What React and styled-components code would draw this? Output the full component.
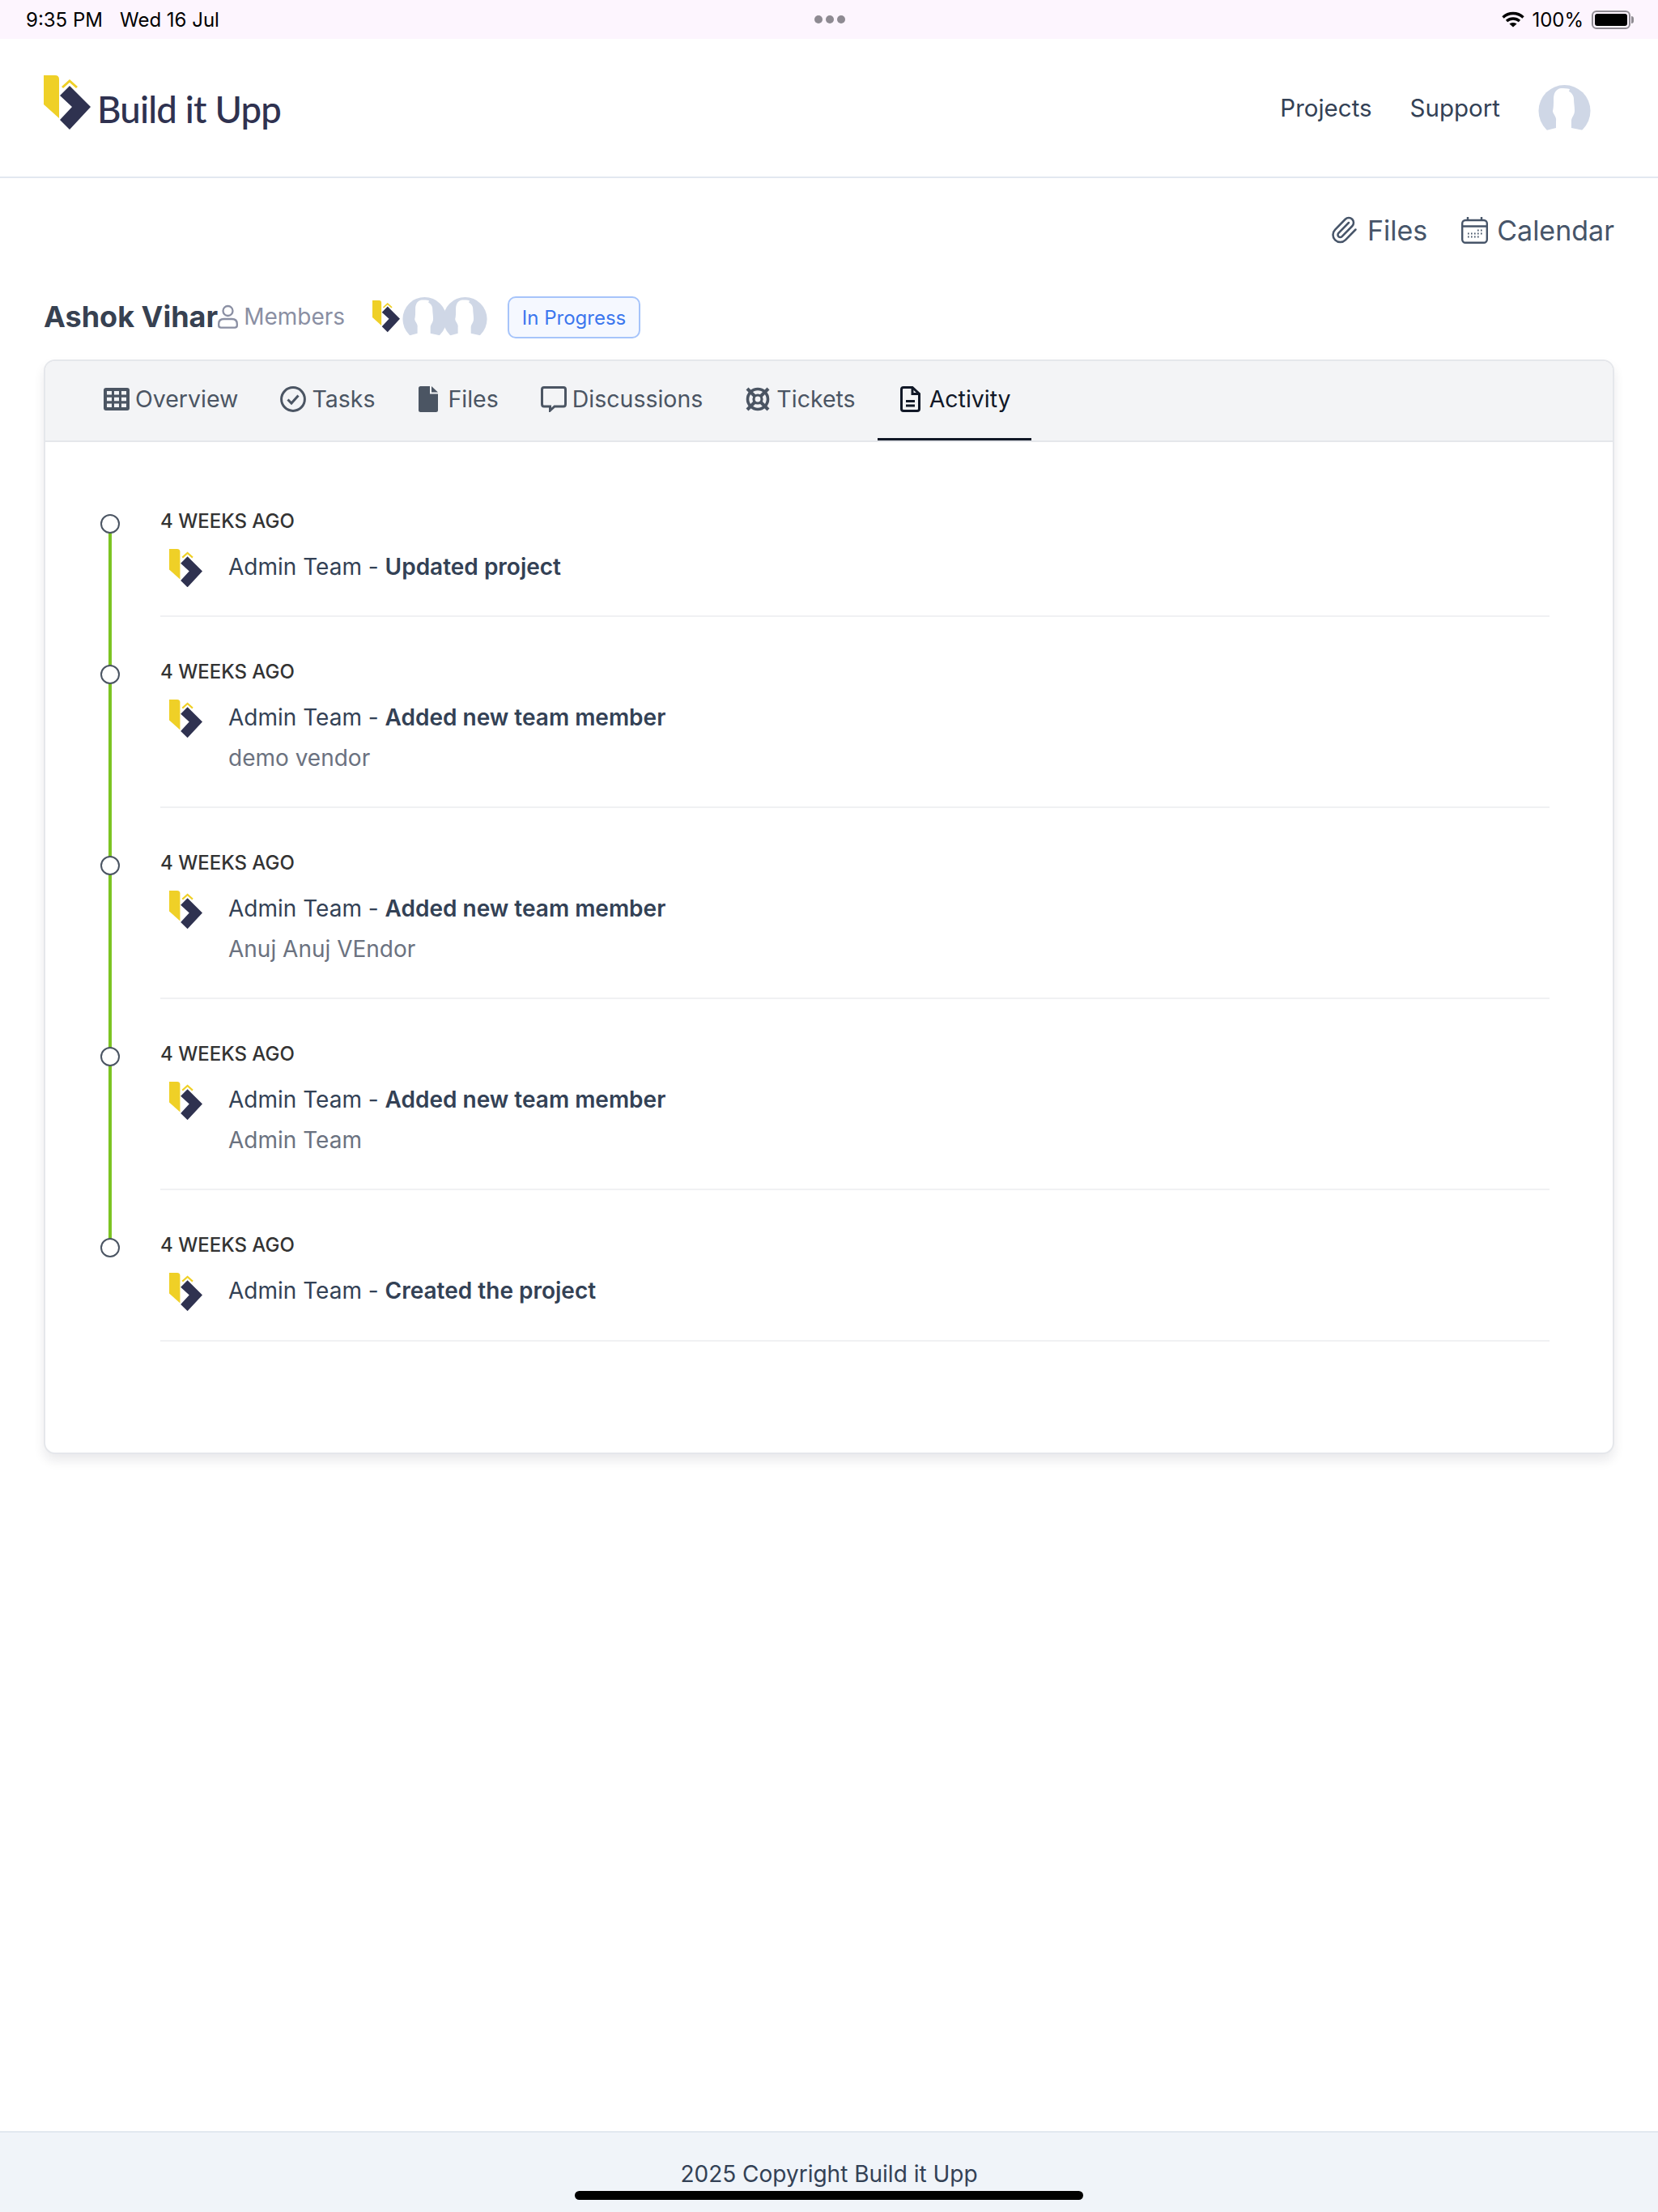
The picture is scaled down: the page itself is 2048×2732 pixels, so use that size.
import React from "react";
import styled, { createGlobalStyle } from "styled-components";
import { Paperclip } from "lucide-react";

const GlobalStyle = createGlobalStyle`
  * { box-sizing: border-box; }
  html, body { margin: 0; padding: 0; background: #fff; }
  body { font-family: Inter, "Liberation Sans", sans-serif; color: #334155; }
`;

const Page = styled.div`
  position: relative;
  min-height: 2732px;
  display: flex;
  flex-direction: column;
`;

const StatusBar = styled.div`
  height: 48px;
  background: #fdf5fe;
  display: grid;
  grid-template-columns: 1fr auto 1fr;
  align-items: center;
  padding: 0 31px 0 32px;
  font-size: 24px;
  color: #000;
`;

const StatusLeft = styled.div`
  display: flex;
  gap: 21px;
`;

const StatusDots = styled.div`
  display: flex;
  gap: 4px;
  span {
    width: 10px;
    height: 10px;
    border-radius: 50%;
    background: #8e8a92;
  }
`;

const StatusRight = styled.div`
  display: flex;
  justify-content: flex-end;
  align-items: center;
  gap: 9px;
`;

const Battery = styled.div`
  position: relative;
  width: 48px;
  height: 23px;
  margin-left: 1px;
  margin-right: 3px;
  border: 2px solid #8f8b92;
  border-radius: 6px;
  padding: 2px;
  &::before {
    content: "";
    display: block;
    height: 100%;
    background: #000;
    border-radius: 3px;
  }
  &::after {
    content: "";
    position: absolute;
    right: -6px;
    top: 5px;
    width: 3px;
    height: 9px;
    background: #8f8b92;
    border-radius: 0 3px 3px 0;
  }
`;

const Header = styled.header`
  height: 172px;
  border-bottom: 2px solid #e2e8f0;
  display: flex;
  align-items: center;
  justify-content: space-between;
  padding: 0 83px 0 54px;
`;

const Brand = styled.div`
  display: flex;
  align-items: center;
  gap: 8px;
  svg {
    margin-top: -13px;
  }
`;

const BrandName = styled.span`
  font-family: Lato, sans-serif;
  font-size: 45.5px;
  font-weight: 500;
  letter-spacing: -0.8px;
  color: #2f3250;
  margin-top: 2px;
`;

const Nav = styled.nav`
  display: flex;
  align-items: center;
  gap: 47px;
  font-size: 29.5px;
  color: #334155;
`;

const Main = styled.main`
  flex: 1;
  padding: 0 54px;
`;

const TopLinks = styled.div`
  display: flex;
  justify-content: flex-end;
  gap: 42px;
  padding-top: 41px;
  font-size: 34px;
  color: #475569;
`;

const TopLink = styled.div`
  display: flex;
  align-items: center;
  gap: 11px;
  height: 46px;
`;

const TitleRow = styled.div`
  display: flex;
  align-items: center;
  margin-top: 58px;
  height: 52px;
`;

const Title = styled.h1`
  margin: 0;
  font-size: 36px;
  font-weight: 700;
  color: #374151;
`;

const Members = styled.div`
  display: flex;
  align-items: center;
  gap: 7px;
  font-size: 28px;
  color: #8a8fa3;
`;

const AvatarGroup = styled.div`
  display: flex;
  align-items: center;
  margin-left: 34px;
  svg + svg {
    margin-left: 3px;
  }
  svg + svg + svg {
    margin-left: -5px;
  }
`;

const Badge = styled.div`
  margin: 2px 0 0 25px;
  height: 52px;
  width: 164px;
  display: flex;
  align-items: center;
  justify-content: center;
  background: #f5f8ff;
  border: 2px solid #a6c4fa;
  border-radius: 10px;
  font-size: 24px;
  color: #3b76ee;
`;

const Card = styled.section`
  margin-top: 27px;
  height: 1352px;
  background: #fff;
  border: 2px solid #e5e7eb;
  border-radius: 14px;
  box-shadow: 0 8px 14px rgba(17, 24, 39, 0.09);
  overflow: hidden;
`;

const TabBar = styled.div`
  height: 100px;
  background: #f3f4f6;
  border-bottom: 2px solid #e5e7eb;
  display: flex;
  padding-left: 72px;
  gap: 52px;
`;

const Tab = styled.div`
  height: 98px;
  display: flex;
  align-items: center;
  gap: ${(p) => (p.$wide ? "12px" : "7px")};
  margin-left: ${(p) => (p.$wide ? "2px" : "0")};
  padding-bottom: 2px;
  font-size: 28.5px;
  color: #4b5563;
  border-bottom: 3px solid transparent;
`;

const ActiveTab = styled(Tab)`
  gap: 11px;
  padding: 0 25px 2px 28px;
  margin-left: -25px;
  color: #111827;
  border-bottom-color: #111827;
`;

const Timeline = styled.ol`
  list-style: none;
  margin: 0;
  padding: 80px 78px 0 142px;
`;

const Row = styled.li`
  position: relative;
  margin-bottom: 50px;
  padding-bottom: 40px;
  border-bottom: 2px solid #f0f1f3;

  &::before {
    content: "";
    position: absolute;
    left: -64px;
    top: 20px;
    bottom: -70px;
    width: 4px;
    background: #7cc422;
  }
  &:last-child::before {
    display: none;
  }
  &::after {
    content: "";
    position: absolute;
    left: -74px;
    top: 9px;
    width: 20px;
    height: 20px;
    border-radius: 50%;
    background: #fff;
    border: 2px solid #4b5563;
  }
`;

const When = styled.div`
  font-size: 24px;
  line-height: 36px;
  font-weight: 500;
  color: #333;
`;

const Entry = styled.div`
  margin-top: 18px;
  display: flex;
  gap: 32px;
  padding-left: 11px;
  svg {
    margin: -2px 0 -5px;
    flex: none;
  }
`;

const EntryText = styled.div`
  font-size: 28px;
  line-height: 40px;
  color: #334155;
  b {
    font-weight: 600;
  }
`;

const EntryNote = styled.div`
  margin-top: 10px;
  color: #6b7280;
`;

const Footer = styled.footer`
  height: 100px;
  background: #f0f4f9;
  border-top: 2px solid #e2e8f0;
  padding-top: 33px;
  text-align: center;
  font-size: 28px;
  line-height: 36px;
  color: #334155;
`;

const HomeBar = styled.div`
  position: absolute;
  left: 710px;
  bottom: 15px;
  width: 628px;
  height: 11px;
  border-radius: 6px;
  background: #000;
`;

function Logo({ width }) {
  return (
    <svg width={width} height={(width * 67) / 58} viewBox="0 0 58 67">
      <path d="M0 0H14Q19 0 19 5V53L0 36Z" fill="#efd027" />
      <path d="M23 15L32 7L41 15" fill="none" stroke="#efd027" strokeWidth="3" />
      <path d="M32 13L58 39L32 67L20 55L35 39L20 25Z" fill="#2f3250" />
    </svg>
  );
}

function Avatar({ size }) {
  return (
    <svg width={size} height={(size * 56) / 65} viewBox="0 0 65 56">
      <circle cx="32.5" cy="32" r="32" fill="#cfd7e6" />
      <path
        d="M28 4C22 5 19 10 19 17C19 24 19 28 18 32C18 36 23 39 22 44L22 53L10 56V60H56V56L41 53L41 44C41 40 45 37 45 32C45 26 44 22 44 17C44 13 41 9 38 8L39 5C36 4 32 4 28 4Z"
        fill="#fff"
      />
    </svg>
  );
}

function WifiIcon() {
  return (
    <svg width="28" height="20" viewBox="0 0 28 20" fill="none" stroke="#000" strokeWidth="3.4">
      <path d="M1.5 7.5C8.5 0.8 19.5 0.8 26.5 7.5" />
      <path d="M6 12C10.5 8 17.5 8 22 12" />
      <path d="M14 19.5L9.5 15.5C12 13.5 16 13.5 18.5 15.5Z" fill="#000" stroke="none" />
    </svg>
  );
}

function CalendarIcon() {
  return (
    <svg width="33" height="34" viewBox="0 0 33 34" fill="none" stroke="#475569" strokeWidth="2.4">
      <rect x="1.2" y="5" width="30.6" height="27.8" rx="4" />
      <path d="M1.2 12.5H31.8M8 1V5M25 1V5" />
      <path
        d="M20 17.5h1.6M24 17.5h1.6M16 21.5h1.6M20 21.5h1.6M24 21.5h1.6M8 25.5h1.6M12 25.5h1.6M16 25.5h1.6M20 25.5h1.6M8 21.5h1.6M12 21.5h1.6"
        strokeWidth="2"
      />
    </svg>
  );
}

function PersonIcon() {
  return (
    <svg width="25" height="30" viewBox="0 0 25 30" fill="none" stroke="#8a8fa3" strokeWidth="2.3">
      <circle cx="12.5" cy="8" r="6" />
      <path d="M1.2 26V24Q1.2 18 7.5 18H17.5Q23.8 18 23.8 24V26Q23.8 28.6 21 28.6H4Q1.2 28.6 1.2 26Z" />
    </svg>
  );
}

function TableIcon() {
  return (
    <svg width="32" height="28" viewBox="0 0 32 28">
      <rect width="32" height="28" rx="3" fill="#4b5563" />
      <path
        d="M4 4h6v4.5h-6zM13 4h6v4.5h-6zM22 4h6v4.5h-6zM4 11.7h6v4.6h-6zM13 11.7h6v4.6h-6zM22 11.7h6v4.6h-6zM4 19.5h6v4.5h-6zM13 19.5h6v4.5h-6zM22 19.5h6v4.5h-6z"
        fill="#f3f4f6"
      />
    </svg>
  );
}

function CheckIcon() {
  return (
    <svg width="32" height="32" viewBox="0 0 32 32" fill="none" stroke="#4b5563" strokeWidth="3">
      <circle cx="16" cy="16" r="14.4" />
      <path d="M9.5 16.5L14 21L22.5 11.5" />
    </svg>
  );
}

function FileIcon() {
  return (
    <svg width="24" height="32" viewBox="0 0 24 32">
      <path d="M2.5 0H14V9.5H24V29.5Q24 32 21.5 32H2.5Q0 32 0 29.5V2.5Q0 0 2.5 0Z" fill="#4b5563" />
      <path d="M16 0L24 7.5H16Z" fill="#4b5563" />
    </svg>
  );
}

function BubbleIcon() {
  return (
    <svg width="32" height="32" viewBox="0 0 32 32" fill="none" stroke="#4b5563" strokeWidth="3">
      <path d="M4 1.5H28Q30.5 1.5 30.5 4V22Q30.5 25 28 25H17L11.5 30V25H4Q1.5 25 1.5 22V4Q1.5 1.5 4 1.5Z" />
    </svg>
  );
}

function LifebuoyIcon() {
  return (
    <svg width="32" height="32" viewBox="0 0 32 32" fill="none" stroke="#4b5563">
      <circle cx="16" cy="16" r="12.5" strokeWidth="3.6" />
      <circle cx="16" cy="16" r="5" strokeWidth="3.2" />
      <path d="M3 3L12 12M29 3L20 12M3 29L12 20M29 29L20 20" strokeWidth="4.2" />
    </svg>
  );
}

function DocIcon() {
  return (
    <svg width="25" height="32" viewBox="0 0 25 32" fill="none" stroke="#111827" strokeWidth="3">
      <path d="M4 1.5H15L23.5 9.5V28Q23.5 30.5 21 30.5H4Q1.5 30.5 1.5 28V4Q1.5 1.5 4 1.5Z" />
      <path d="M15 1.5V9.5H23.5" />
      <path d="M7 18.5H18M7 24H18" strokeWidth="2.8" />
    </svg>
  );
}

const tabs = [
  { label: "Overview", icon: <TableIcon /> },
  { label: "Tasks", icon: <CheckIcon /> },
  { label: "Files", icon: <FileIcon />, wide: true },
  { label: "Discussions", icon: <BubbleIcon /> },
  { label: "Tickets", icon: <LifebuoyIcon /> },
];

const activity = [
  { action: "Updated project" },
  { action: "Added new team member", note: "demo vendor" },
  { action: "Added new team member", note: "Anuj Anuj VEndor" },
  { action: "Added new team member", note: "Admin Team" },
  { action: "Created the project" },
];

export default function App() {
  return (
    <Page>
      <GlobalStyle />
      <StatusBar>
        <StatusLeft>
          <span>9:35 PM</span>
          <span>Wed 16 Jul</span>
        </StatusLeft>
        <StatusDots>
          <span />
          <span />
          <span />
        </StatusDots>
        <StatusRight>
          <WifiIcon />
          <span>100%</span>
          <Battery />
        </StatusRight>
      </StatusBar>

      <Header>
        <Brand>
          <Logo width={58} />
          <BrandName>Build it Upp</BrandName>
        </Brand>
        <Nav>
          <span>Projects</span>
          <span>Support</span>
          <Avatar size={65} />
        </Nav>
      </Header>

      <Main>
        <TopLinks>
          <TopLink>
            <Paperclip size={36} strokeWidth={1.7} />
            Files
          </TopLink>
          <TopLink>
            <CalendarIcon />
            Calendar
          </TopLink>
        </TopLinks>

        <TitleRow>
          <Title>Ashok Vihar</Title>
          <Members>
            <PersonIcon />
            Members
          </Members>
          <AvatarGroup>
            <Logo width={34} />
            <Avatar size={55} />
            <Avatar size={55} />
          </AvatarGroup>
          <Badge>In Progress</Badge>
        </TitleRow>

        <Card>
          <TabBar>
            {tabs.map((tab) => (
              <Tab key={tab.label} $wide={tab.wide}>
                {tab.icon}
                {tab.label}
              </Tab>
            ))}
            <ActiveTab>
              <DocIcon />
              Activity
            </ActiveTab>
          </TabBar>

          <Timeline>
            {activity.map((item, i) => (
              <Row key={i}>
                <When>4 WEEKS AGO</When>
                <Entry>
                  <Logo width={41} />
                  <EntryText>
                    Admin Team - <b>{item.action}</b>
                    {item.note && <EntryNote>{item.note}</EntryNote>}
                  </EntryText>
                </Entry>
              </Row>
            ))}
          </Timeline>
        </Card>
      </Main>

      <Footer>2025 Copyright Build it Upp</Footer>
      <HomeBar />
    </Page>
  );
}
